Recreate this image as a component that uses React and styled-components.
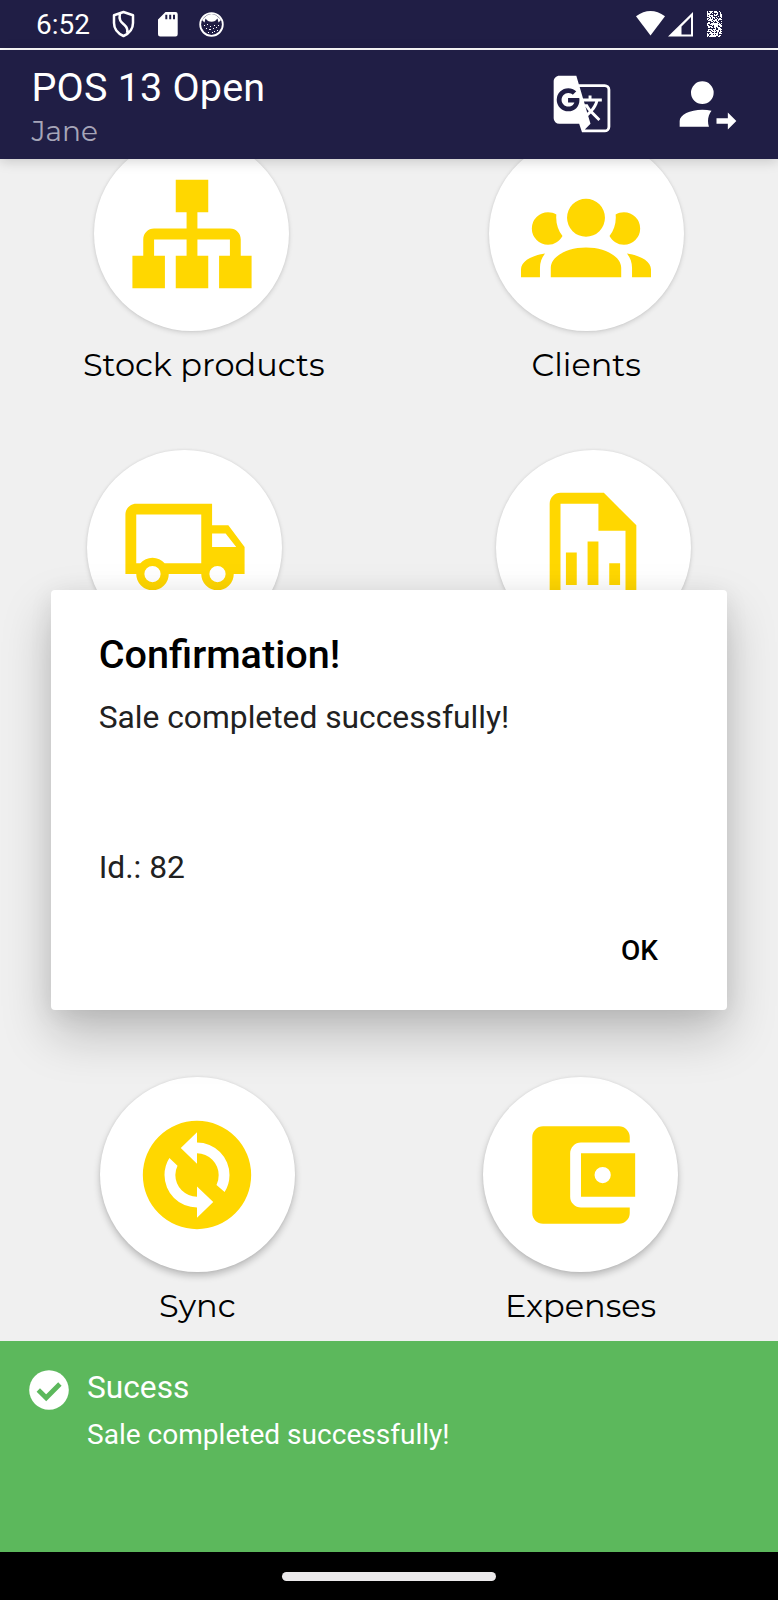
import React from "react";
import styled, { createGlobalStyle } from "styled-components";

const GlobalStyle = createGlobalStyle`
  * { box-sizing: border-box; }
  body { margin: 0; background: #f0f0f0; font-family: Roboto, "Liberation Sans", sans-serif; }
  svg { display: block; flex: none; }
`;

const geometric = `Montserrat, Inter, "Open Sans", sans-serif`;

const Screen = styled.div`
  position: relative;
  width: 778px;
  height: 1600px;
  display: flex;
  flex-direction: column;
  overflow: hidden;
  background: #f0f0f0;
`;

const StatusBar = styled.div`
  height: 49.5px;
  flex: none;
  display: flex;
  justify-content: space-between;
  padding: 0 56px 0 36px;
  background: #201e45;
  border-bottom: 2px solid #fff;
`;

const StatusGroup = styled.div`
  display: flex;
  align-items: flex-start;
`;

const Clock = styled.span`
  font-size: 28px;
  line-height: 32px;
  margin-top: 9px;
  width: 55px;
  color: #fff;
`;

const StatusIcon = styled.svg`
  margin: ${(p) => p.$top}px 0 0 ${(p) => p.$gap}px;
  fill: #fff;
`;

const AppBar = styled.header`
  height: 109px;
  flex: none;
  display: flex;
  justify-content: space-between;
  padding: 0 36.5px 0 31.5px;
  background: #201e45;
  box-shadow: 0 2px 12px rgba(0, 0, 0, 0.18);
  position: relative;
  z-index: 1;
`;

const Titles = styled.div`
  display: flex;
  flex-direction: column;
  padding-top: 15.5px;
`;

const Title = styled.h1`
  margin: 0;
  font-size: 39.5px;
  font-weight: 400;
  line-height: 46px;
  letter-spacing: 0.2px;
  color: #fff;
`;

const Subtitle = styled.span`
  font-family: ${geometric};
  font-size: 28px;
  font-weight: 400;
  line-height: 34px;
  margin-top: 2.5px;
  color: #a6a5b8;
`;

const Actions = styled.div`
  display: flex;
  gap: 57.5px;
  padding-top: 20px;
`;

const Content = styled.main`
  flex: 1;
  min-height: 0;
  overflow: hidden;
`;

const Menu = styled.div`
  margin-top: -22.5px;
`;

const MenuRow = styled.div`
  height: 313.7px;
  display: flex;
  justify-content: center;
  gap: ${(p) => p.$gap}px;
`;

const MenuItem = styled.div`
  width: 260px;
  display: flex;
  flex-direction: column;
  align-items: center;
`;

const Disc = styled.div`
  width: 195px;
  height: 195px;
  flex: none;
  border-radius: 50%;
  display: flex;
  align-items: center;
  justify-content: center;
  background: #fff;
  box-shadow: ${(p) =>
    p.$raised
      ? "0 4px 7px rgba(0,0,0,0.22), 0 0 3px rgba(0,0,0,0.07)"
      : "0 2px 5px rgba(0,0,0,0.12), 0 0 3px rgba(0,0,0,0.08)"};
`;

const Label = styled.span`
  font-family: ${geometric};
  font-size: 32px;
  font-weight: 370;
  line-height: 40px;
  margin-top: 14px;
  padding-left: ${(p) => p.$indent || 0}px;
  white-space: nowrap;
  color: #000;
`;

const Dialog = styled.section`
  position: absolute;
  left: 51px;
  top: 589.6px;
  width: 676px;
  height: 420.7px;
  z-index: 2;
  border-radius: 4px;
  padding: 42px 69px 0 47.7px;
  display: flex;
  flex-direction: column;
  background: #fff;
  box-shadow: 0 24px 50px rgba(0, 0, 0, 0.22), 0 4px 24px rgba(0, 0, 0, 0.07);
`;

const DialogTitle = styled.h2`
  margin: 0;
  font-size: 39.6px;
  font-weight: 500;
  line-height: 46px;
  color: #000;
`;

const DialogText = styled.p`
  margin: 21.5px 0 44.4px;
  font-size: 31.75px;
  line-height: 37.5px;
  white-space: pre-line;
  color: #212121;
`;

const DialogButton = styled.button`
  align-self: flex-end;
  border: 0;
  padding: 0;
  background: none;
  font: 500 28px/40px Roboto, sans-serif;
  color: #000;
`;

const Snackbar = styled.section`
  height: 211.5px;
  flex: none;
  display: flex;
  padding: 29px 29px 0;
  gap: 18px;
  background: #5cb85c;
  color: #fff;
`;

const SnackTexts = styled.div`
  display: flex;
  flex-direction: column;
  margin-top: -0.4px;
`;

const SnackTitle = styled.strong`
  font-size: 31.7px;
  font-weight: 400;
  line-height: 38px;
`;

const SnackText = styled.span`
  font-size: 28.05px;
  line-height: 34px;
  margin-top: 11px;
`;

const NavBar = styled.footer`
  height: 48px;
  flex: none;
  display: flex;
  justify-content: center;
  padding-top: 20px;
  background: #000;
`;

const HomePill = styled.div`
  width: 214px;
  height: 8.5px;
  border-radius: 5px;
  background: #ebe9ea;
`;

const icons = {
  translate:
    "M20,5H10.88L10,2H4C2.9,2 2,2.9 2,4V17A2,2 0 0,0 4,19H11L12,22H20A2,2 0 0,0 22,20V7A2,2 0 0,0 20,5M7.17,14.59A4.09,4.09 0 0,1 3.08,10.5A4.09,4.09 0 0,1 7.17,6.41C8.21,6.41 9.16,6.78 9.91,7.5L10,7.54L8.75,8.72L8.69,8.67C8.4,8.4 7.91,8.08 7.17,8.08C5.86,8.08 4.79,9.17 4.79,10.5C4.79,11.83 5.86,12.92 7.17,12.92C8.54,12.92 9.13,12.05 9.29,11.46H7.08V9.91H11.03L11.04,10C11.08,10.2 11.09,10.38 11.09,10.58C11.09,12.94 9.5,14.59 7.17,14.59M13.2,12.88C13.53,13.5 13.94,14.06 14.39,14.58L13.85,15.11L13.2,12.88M13.97,12.12H13L12.67,11.08H16.66C16.66,11.08 16.32,12.39 15.1,13.82C14.58,13.2 14.21,12.59 13.97,12.12M21,20A1,1 0 0,1 20,21H13L15,19L14.19,16.23L15.11,15.31L17.79,18L18.5,17.27L15.81,14.59C16.71,13.56 17.41,12.34 17.73,11.08H19V10.04H15.36V9H14.32V10.04H12.36L11.18,6H20A1,1 0 0,1 21,7V20Z",
  logout:
    "M19,21V19H15V17H19V15L22,18L19,21M10,4A4,4 0 0,1 14,8A4,4 0 0,1 10,12A4,4 0 0,1 6,8A4,4 0 0,1 10,4M10,14C11.15,14 12.25,14.12 13.24,14.34C12.46,15.35 12,16.62 12,18C12,18.7 12.12,19.37 12.34,20H2V18C2,15.79 5.58,14 10,14Z",
  sitemap:
    "M9,2V8H11V11H5C3.89,11 3,11.89 3,13V16H1V22H7V16H5V13H11V16H9V22H15V16H13V13H19V16H17V22H23V16H21V13C21,11.89 20.11,11 19,11H13V8H15V2H9Z",
  group:
    "M12,5.5A3.5,3.5 0 0,1 15.5,9A3.5,3.5 0 0,1 12,12.5A3.5,3.5 0 0,1 8.5,9A3.5,3.5 0 0,1 12,5.5M5,8C5.56,8 6.08,8.15 6.53,8.42C6.38,9.85 6.8,11.27 7.66,12.38C7.16,13.34 6.16,14 5,14A3,3 0 0,1 2,11A3,3 0 0,1 5,8M19,8A3,3 0 0,1 22,11A3,3 0 0,1 19,14C17.84,14 16.84,13.34 16.34,12.38C17.2,11.27 17.62,9.85 17.47,8.42C17.92,8.15 18.44,8 19,8M5.5,18.25C5.5,16.18 8.41,14.5 12,14.5C15.59,14.5 18.5,16.18 18.5,18.25V20H5.5V18.25M0,20V18.5C0,17.11 1.89,15.94 4.45,15.6C3.86,16.28 3.5,17.22 3.5,18.25V20H0M24,20H20.5V18.25C20.5,17.22 20.14,16.28 19.55,15.6C22.11,15.94 24,17.11 24,18.5V20Z",
  truck:
    "M18,18.5A1.5,1.5 0 0,0 19.5,17A1.5,1.5 0 0,0 18,15.5A1.5,1.5 0 0,0 16.5,17A1.5,1.5 0 0,0 18,18.5M19.5,9.5H17V12H21.46L19.5,9.5M6,18.5A1.5,1.5 0 0,0 7.5,17A1.5,1.5 0 0,0 6,15.5A1.5,1.5 0 0,0 4.5,17A1.5,1.5 0 0,0 6,18.5M20,8L23,12V17H21A3,3 0 0,1 18,20A3,3 0 0,1 15,17H9A3,3 0 0,1 6,20A3,3 0 0,1 3,17H1V6C1,4.89 1.89,4 3,4H17V8H20M3,6V15H3.76C4.31,14.39 5.11,14 6,14C6.89,14 7.69,14.39 8.24,15H15V6H3Z",
  chart:
    "M14 2H6C4.9 2 4 2.9 4 4V20C4 21.1 4.9 22 6 22H18C19.1 22 20 21.1 20 20V8L14 2M18 20H6V4H13V9H18V20M9 13V19H7V13H9M15 15V19H17V15H15M11 11V19H13V11H11Z",
  sync:
    "M12 2A10 10 0 0 0 2 12A10 10 0 0 0 12 22A10 10 0 0 0 22 12A10 10 0 0 0 12 2ZM15.6 13.85A4 4 0 0 0 16 12A4 4 0 0 0 12 8V9.9L9 7L12 4.1V6A6 6 0 0 1 18 12A6 6 0 0 1 17.1 15.15ZM6.9 8.85L8.4 10.3A4 4 0 0 0 8 12A4 4 0 0 0 12 16V14.1L15 17L12 19.9V18A6 6 0 0 1 6 12A6 6 0 0 1 6.9 8.85Z",
  wallet:
    "M21,18V19A2,2 0 0,1 19,21H5C3.89,21 3,20.1 3,19V5A2,2 0 0,1 5,3H19A2,2 0 0,1 21,5V6H12C10.89,6 10,6.9 10,8V16A2,2 0 0,0 12,18M12,16H22V8H12M16,13.5A1.5,1.5 0 0,1 14.5,12A1.5,1.5 0 0,1 16,10.5A1.5,1.5 0 0,1 17.5,12A1.5,1.5 0 0,1 16,13.5Z",
};

const Icon = ({ name, size, color }) => (
  <svg width={size} height={size} viewBox="0 0 24 24" fill={color} fillRule="evenodd">
    <path d={icons[name]} />
  </svg>
);

const rows = [
  { gap: 134.5, items: [["sitemap", "Stock products", 24], ["group", "Clients"]] },
  { gap: 148.4, items: [["truck"], ["chart"]] },
  { gap: 140, items: [] },
  { gap: 123.2, raised: true, items: [["sync", "Sync"], ["wallet", "Expenses"]] },
];

// Speckled battery glyph: a fixed pattern of one-pixel dots.
const batteryDots = [];
for (let y = 0; y < 26; y++) {
  for (let x = 0; x < 15; x++) {
    const n = Math.sin(x * 12.9898 + y * 78.233) * 43758.5453;
    if (n - Math.floor(n) < 0.56) batteryDots.push(`M${x} ${y}h1v1h-1z`);
  }
}

export default function App() {
  return (
    <Screen>
      <GlobalStyle />
      <StatusBar>
        <StatusGroup>
          <Clock>6:52</Clock>
          <StatusIcon $top={10} $gap={21} width="23" height="28" viewBox="0 0 23 28">
            <path
              d="M11.5 2L21 5.2V13C21 19 17 23.5 11.5 26C6 23.5 2 19 2 13V5.2ZM8 3.5C6.5 10 9 12 12 14.5C15.5 17.5 16 20 15 23"
              fill="none"
              stroke="#fff"
              strokeWidth="2.5"
              strokeLinejoin="round"
            />
          </StatusIcon>
          <StatusIcon $top={11.5} $gap={22.5} width="20" height="25" viewBox="0 0 20 25">
            <path
              fillRule="evenodd"
              d="M7.5 0H17.5Q19.7 0 19.7 2.2V22.3Q19.7 24.5 17.5 24.5H2.2Q0 24.5 0 22.3V7.5ZM7.3 2.7V7.3H9.3V2.7ZM11.2 2.7V7.3H13.2V2.7ZM15 2.7V7.3H17V2.7Z"
            />
          </StatusIcon>
          <StatusIcon $top={11.5} $gap={21.5} width="25" height="25" viewBox="0 0 25 25">
            <circle cx="12.5" cy="12.5" r="11.3" fill="none" stroke="#fff" strokeWidth="1.8" />
            <path d="M3 8Q12.5-4 22 8L19.5 10.5L18.5 6.5L16 9Q12.5 10.5 9 9L6.5 6.5L5.5 10.5Z" />
            <path d="M5 13h1v1h-1zM8 12h1v1h-1zM11 14h1v1h-1zM15 13h1v1h-1zM19 13h1v1h-1zM7 16h1v1h-1zM10 17h2v1h-2zM14 16h1v1h-1zM17 15h1v1h-1zM18 18h1v1h-1zM9 20h1v1h-1zM13 20h1v1h-1zM15 19h1v1h-1z" />
          </StatusIcon>
        </StatusGroup>
        <StatusGroup>
          <StatusIcon $top={11} $gap={0} width="29" height="25" viewBox="0 0 29 25">
            <path d="M0 5.2Q14.5-5.2 29 5.2L14.5 24.5Z" />
          </StatusIcon>
          <StatusIcon $top={11.5} $gap={3} width="25" height="25" viewBox="0 0 25 25">
            <path fillRule="evenodd" d="M25 0V24.5H0ZM23 5L13.5 14.5V22.5H23Z" />
          </StatusIcon>
          <StatusIcon $top={11} $gap={14} width="15" height="26" viewBox="0 0 15 26">
            <path d={batteryDots.join("")} />
          </StatusIcon>
        </StatusGroup>
      </StatusBar>

      <AppBar>
        <Titles>
          <Title>POS 13 Open</Title>
          <Subtitle>Jane</Subtitle>
        </Titles>
        <Actions>
          <Icon name="translate" size={68} color="#fff" />
          <Icon name="logout" size={68} color="#fff" />
        </Actions>
      </AppBar>

      <Content>
        <Menu>
          {rows.map((row, i) => (
            <MenuRow key={i} $gap={row.gap}>
              {row.items.map(([icon, label, indent]) => (
                <MenuItem key={icon}>
                  <Disc $raised={row.raised}>
                    <Icon name={icon} size={130} color="#ffd700" />
                  </Disc>
                  {label && <Label $indent={indent}>{label}</Label>}
                </MenuItem>
              ))}
            </MenuRow>
          ))}
        </Menu>
      </Content>

      <Dialog>
        <DialogTitle>Confirmation!</DialogTitle>
        <DialogText>{"Sale completed successfully!\n\n\n\nId.: 82"}</DialogText>
        <DialogButton>OK</DialogButton>
      </Dialog>

      <Snackbar>
        <svg width="40" height="40" viewBox="0 0 40 40">
          <circle cx="20" cy="20" r="19.8" fill="#fff" />
          <path d="M9.3 20L17.2 27.8L30.9 14" fill="none" stroke="#5cb85c" strokeWidth="4.8" />
        </svg>
        <SnackTexts>
          <SnackTitle>Sucess</SnackTitle>
          <SnackText>Sale completed successfully!</SnackText>
        </SnackTexts>
      </Snackbar>
      <NavBar>
        <HomePill />
      </NavBar>
    </Screen>
  );
}
